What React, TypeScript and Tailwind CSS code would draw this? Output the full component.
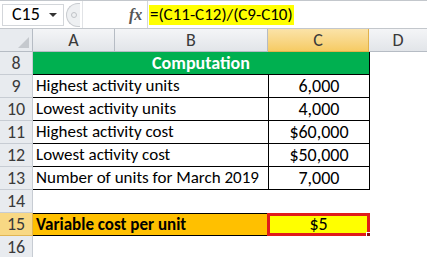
import React from 'react';

const font = { fontFamily: 'Carlito, Lato, "Open Sans", sans-serif' };

function RowHead({ n, active = false }: { n: number; active?: boolean }) {
  return (
    <div
      className={`w-[33px] shrink-0 flex items-center justify-center border-r border-b text-[18px] text-[#3a3a3a] ${
        active ? 'bg-[#f8d884] border-[#e0b553]' : 'bg-[#e8ebef] border-[#c7ccd3]'
      }`}
    >
      {n}
    </div>
  );
}

const rows = [
  { n: 9, label: 'Highest activity units', value: '6,000' },
  { n: 10, label: 'Lowest activity units', value: '4,000' },
  { n: 11, label: 'Highest activity cost', value: '$60,000' },
  { n: 12, label: 'Lowest activity cost', value: '$50,000' },
  { n: 13, label: 'Number of units for March 2019', value: '7,000' },
];

export default function App() {
  return (
    <div className="w-[427px] h-[257px] overflow-hidden bg-white text-black" style={font}>
      {/* Formula bar */}
      <div className="h-[29px] flex items-center border-t border-b border-[#c3c7cc] bg-white">
        <div className="ml-[2px] w-[62px] h-[22px] flex items-center border border-[#d3d6da] bg-white">
          <span className="ml-[9px] text-[18px]">C15</span>
          <span className="ml-auto mr-[6px] w-0 h-0 border-l-[4px] border-r-[4px] border-t-[4px] border-l-transparent border-r-transparent border-t-[#333]" />
        </div>
        <div className="ml-[2px] w-[14px] h-[24px] rounded-l-full border border-r-0 border-[#c9ccd0] bg-[#eef0f2] flex items-center justify-center">
          <div className="w-[6px] h-[6px] rounded-full border border-[#c0c3c7]" />
        </div>
        <div className="flex-1 h-full border-l border-[#e1e3e6] ml-[2px]" />
        <span className="w-[18px] text-[16px] italic font-bold text-[#555]" style={{ fontFamily: '"Liberation Serif", serif' }}>
          fx
        </span>
        <div className="w-[280px] h-full flex items-center border-l border-[#d3d6da]">
          <span className="ml-[1px] h-[20px] px-[1px] bg-[#ffff00] text-[17px] leading-[20px] whitespace-nowrap">
            =(C11-C12)/(C9-C10)
          </span>
        </div>
      </div>

      {/* Column headers */}
      <div className="flex h-[23px]">
        <div className="w-[33px] shrink-0 relative border-r border-b border-[#b6bcc4] bg-[#e8ebef]">
          <svg className="absolute right-[3px] bottom-[3px]" width="11" height="11" viewBox="0 0 11 11">
            <path d="M11 0 L11 11 L0 11 Z" fill="#c5c9ce" />
          </svg>
        </div>
        <div className="w-[82px] shrink-0 flex items-center justify-center border-r border-b border-[#b6bcc4] bg-gradient-to-b from-[#f4f5f7] to-[#e2e5e9] text-[18px] text-[#3a3a3a]">A</div>
        <div className="w-[153px] shrink-0 flex items-center justify-center border-r border-b border-[#b6bcc4] bg-gradient-to-b from-[#f4f5f7] to-[#e2e5e9] text-[18px] text-[#3a3a3a]">B</div>
        <div className="w-[101px] shrink-0 flex items-center justify-center border-r border-b border-[#e1b24a] bg-gradient-to-b from-[#fbe3a8] to-[#f6cb63] text-[18px] text-[#3a3a3a]">C</div>
        <div className="flex-1 flex items-center justify-center border-b border-[#b6bcc4] bg-gradient-to-b from-[#f4f5f7] to-[#e2e5e9] text-[18px] text-[#3a3a3a]">D</div>
      </div>

      {/* Row 8 */}
      <div className="flex h-[23px]">
        <RowHead n={8} />
        <div className="w-[337px] shrink-0 flex items-center justify-center bg-[#00b050] border-b border-r border-black text-white font-bold text-[18px]">
          Computation
        </div>
        <div className="flex-1" />
      </div>

      {rows.map((r) => (
        <div key={r.n} className="flex h-[23px]">
          <RowHead n={r.n} />
          <div className="w-[235px] shrink-0 flex items-center pl-[3px] border-b border-black text-[17px] whitespace-nowrap">{r.label}</div>
          <div className="w-[102px] shrink-0 flex items-center justify-center border-l border-r border-b border-black text-[18px]">
            {r.value}
          </div>
          <div className="flex-1" />
        </div>
      ))}

      {/* Row 14 */}
      <div className="flex h-[23px]">
        <RowHead n={14} />
        <div className="flex-1" />
      </div>

      {/* Row 15 */}
      <div className="flex h-[23px]">
        <RowHead n={15} active />
        <div className="w-[234px] shrink-0 flex items-center pl-[3px] bg-[#ffc000] border-y border-black text-[17px] font-bold whitespace-nowrap">
          Variable cost per unit
        </div>
        <div className="relative w-[103px] shrink-0 flex items-center justify-center bg-[#ffff00] border-[3px] border-[#e01b1b] text-[18px]">
          $5
          <div className="absolute -right-[4px] -bottom-[4px] w-[5px] h-[5px] bg-[#8a1010] border border-white" />
        </div>
        <div className="flex-1" />
      </div>

      {/* Row 16 */}
      <div className="flex h-[23px]">
        <RowHead n={16} />
        <div className="flex-1" />
      </div>
    </div>
  );
}
